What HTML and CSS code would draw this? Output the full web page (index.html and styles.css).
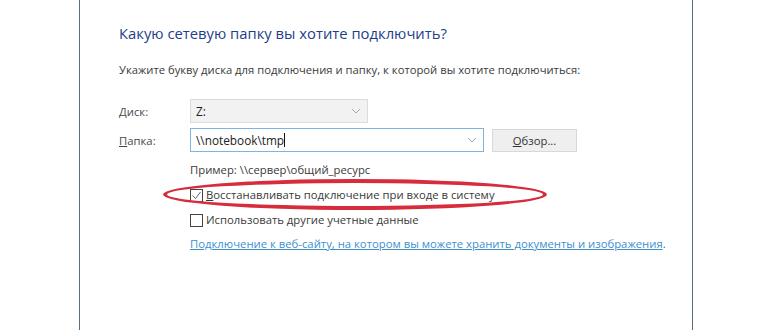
FILE: index.html
```html
<!DOCTYPE html>
<html lang="ru">
<head>
  <meta charset="UTF-8">
  <title>Подключить сетевой диск</title>
  <link rel="stylesheet" href="styles.css">
</head>
<body>
  <div class="dialog">
    <h1 class="title">Какую сетевую папку вы хотите подключить?</h1>
    <p class="hint">Укажите букву диска для подключения и папку, к которой вы хотите подключиться:</p>

    <div class="form">
      <label class="label"><u>Д</u>иск:</label>
      <div class="combo combo-drive">
        <span>Z:</span>
        <svg class="chev" width="10" height="6" viewBox="0 0 10 6"><path d="M1 1 L5 5 L9 1" fill="none" stroke="#a8a8a8" stroke-width="1"/></svg>
      </div>

      <label class="label"><u>П</u>апка:</label>
      <div class="folder-row">
        <div class="combo combo-path">
          <span>\\notebook\tmp<i class="caret"></i></span>
          <svg class="chev" width="10" height="6" viewBox="0 0 10 6"><path d="M1 1 L5 5 L9 1" fill="none" stroke="#a8a8a8" stroke-width="1"/></svg>
        </div>
        <button class="btn"><u>О</u>бзор...</button>
      </div>
    </div>

    <div class="options">
      <div class="example">Пример: \\сервер\общий_ресурс</div>
      <div class="check">
        <span class="box">
          <svg width="11" height="11" viewBox="0 0 11 11"><path d="M1.5 5.5 L4.5 8.5 L9.5 2" fill="none" stroke="#666" stroke-width="1"/></svg>
        </span>
        <span><u>В</u>осстанавливать подключение при входе в систему</span>
      </div>
      <div class="check">
        <span class="box"></span>
        <span>Использовать другие учетные <u>д</u>анные</span>
      </div>
      <div class="link-row"><a href="#" class="link">Подключение к веб-сайту, на котором вы можете хранить документы и изображения</a>.</div>
    </div>

    <div class="mark"></div>
  </div>
</body>
</html>
```

FILE: styles.css
```css
* {
  box-sizing: border-box;
}

body {
  margin: 0;
  background: #fff;
  font-family: 'Open Sans', 'Noto Sans', sans-serif;
  color: #333;
}

.dialog {
  position: relative;
  margin-left: 79px;
  width: 614px;
  height: 330px;
  border-left: 1px solid #56707f;
  border-right: 1px solid #56707f;
  padding: 22px 0 0 39px;
}

.title {
  margin: 0;
  font-size: 14.8px;
  font-weight: normal;
  line-height: 22px;
  color: #1c3f86;
}

.hint {
  margin: 17px 0 0;
  font-size: 11.25px;
  line-height: 18px;
  color: #3a3a3a;
}

.form {
  display: grid;
  grid-template-columns: 71px auto;
  row-gap: 5px;
  margin-top: 20px;
  align-items: center;
  font-size: 11.3px;
}

.label {
  color: #4a4a4a;
}

.combo {
  display: flex;
  align-items: center;
  justify-content: space-between;
  height: 24px;
  padding: 0 6px 0 5px;
  font-size: 11.8px;
  color: #222;
}

.combo-drive {
  width: 178px;
  background: #f2f2f2;
  border: 1px solid #dcdcdc;
}

.combo-path {
  width: 294px;
  background: #fff;
  border: 1px solid #7fb3e0;
}

.caret {
  display: inline-block;
  width: 1px;
  height: 14px;
  background: #111;
  vertical-align: -2px;
}

.chev {
  display: block;
}

.folder-row {
  display: flex;
  align-items: center;
  gap: 8px;
}

.btn {
  width: 85px;
  height: 23px;
  background: #efefef;
  border: 1px solid #d8d8d8;
  font-family: inherit;
  font-size: 11.3px;
  color: #333;
  padding: 0;
}

.options {
  margin: 9px 0 0 71px;
  font-size: 11.3px;
  line-height: 18px;
  color: #3a3a3a;
}

.check {
  display: flex;
  align-items: center;
  gap: 3px;
  margin-top: 7px;
}

.box {
  width: 13px;
  height: 13px;
  border: 1px solid #444;
  background: #fff;
  display: flex;
  align-items: center;
  justify-content: center;
}

.link-row {
  margin-top: 6px;
  color: #555;
}

.link {
  color: #3d8fce;
  text-decoration: underline;
}

.mark {
  position: absolute;
  left: 83px;
  top: 179px;
  width: 384px;
  height: 31px;
  border: 4px solid #d62c3c;
  border-radius: 50%;
}
```
